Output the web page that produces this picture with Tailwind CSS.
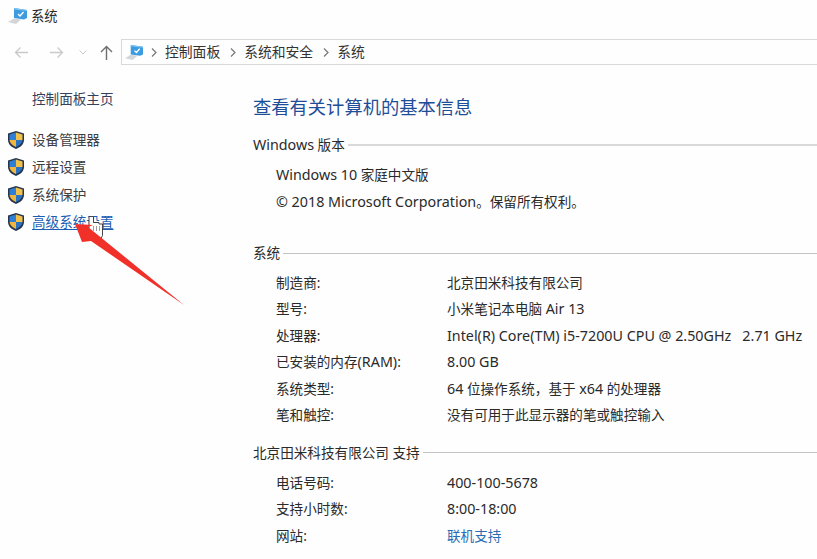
<!DOCTYPE html>
<html lang="zh-CN">
<head>
  <meta charset="UTF-8">
  <title>系统</title>
  <script src="https://cdn.jsdelivr.net/npm/@tailwindcss/browser@4"></script>
</head>
<body class="bg-white">
  <div class="relative w-[817px] h-[559px] overflow-hidden bg-[#fefefe] text-[13.6px] leading-[20px] text-[#2a2a2a] font-['Noto_Sans','Noto_Sans_CJK_SC',sans-serif]">
    <!-- Title bar -->
    <div class="flex items-center h-[32px] pl-[8px] gap-[3px]">
      <svg class="w-[20px] h-[18px]" viewBox="0 0 20 18"><path d="M0 15l6-3.500 7 1-5 4.500z" fill="#d3d6d8"/><path d="M6 1l13 2v8l-3 1.500L6 11z" fill="#3d9be0"/><path d="M6 1l13 2v1L6 2.500z" fill="#7cc4f0"/><path d="M10 7l2 2 3.500-4" fill="none" stroke="#fff" stroke-width="1.400"/></svg>
      <span class="text-[13.300px]">系统</span>
    </div>
    <!-- Toolbar -->
    <div class="flex items-center h-[39px] pt-[1px]">
      <div class="flex items-center w-[121px] pl-[14px]">
        <svg class="w-[15px] h-[13px]" viewBox="0 0 15 13" fill="none" stroke="#c9c9c9" stroke-width="1.300"><path d="M14 6.500H1.500M6.500 1.500l-5 5 5 5"/></svg>
        <svg class="w-[15px] h-[13px] ml-[20px]" viewBox="0 0 15 13" fill="none" stroke="#c9c9c9" stroke-width="1.300"><path d="M1 6.500h12.500M8.500 1.500l5 5-5 5"/></svg>
        <svg class="w-[8px] h-[5px] ml-[15px]" viewBox="0 0 8 5" fill="none" stroke="#c9c9c9"><path d="M.5.500L4 4l3.500-3.500"/></svg>
        <svg class="w-[13px] h-[15px] ml-[13px]" viewBox="0 0 13 15" fill="none" stroke="#6e6e6e" stroke-width="1.400"><path d="M6.500 15V1.500M1 7l5.500-5.500L12 7"/></svg>
      </div>
      <div class="flex flex-1 items-center h-[26px] pl-[3px] border border-r-0 border-[#d9d9d9] text-[13.800px] text-[#333]">
        <svg class="w-[19px] h-[17px]" viewBox="0 0 20 18"><path d="M0 15l6-3.500 7 1-5 4.500z" fill="#d3d6d8"/><path d="M6 1l13 2v8l-3 1.500L6 11z" fill="#3d9be0"/><path d="M6 1l13 2v1L6 2.500z" fill="#7cc4f0"/><path d="M10 7l2 2 3.500-4" fill="none" stroke="#fff" stroke-width="1.400"/></svg>
        <svg class="w-[6px] h-[9px] ml-[7px] mr-[8px]" viewBox="0 0 6 9" fill="none" stroke="#777" stroke-width="1.200"><path d="M1 .5l4 4-4 4"/></svg>
        <span>控制面板</span>
        <svg class="w-[6px] h-[9px] ml-[10px] mr-[8px]" viewBox="0 0 6 9" fill="none" stroke="#777" stroke-width="1.200"><path d="M1 .5l4 4-4 4"/></svg>
        <span>系统和安全</span>
        <svg class="w-[6px] h-[9px] ml-[10px] mr-[8px]" viewBox="0 0 6 9" fill="none" stroke="#777" stroke-width="1.200"><path d="M1 .5l4 4-4 4"/></svg>
        <span>系统</span>
      </div>
    </div>
    <div class="flex">
      <!-- Sidebar -->
      <aside class="w-[253px] shrink-0 pt-[18px]">
        <div class="pl-[32px] h-[20px] text-[#33415c]">控制面板主页</div>
        <ul class="mt-[21px] flex flex-col gap-[7.300px] pl-[8px] text-[#3c4043]">
          <li class="flex items-center h-[20px] gap-[8px]">
            <svg class="w-[16px] h-[18px]" viewBox="0 0 16 18"><path d="M8 0l8 2.500V9c0 4.500-4 7.500-8 9-4-1.500-8-4.500-8-9V2.500z" fill="#27364d"/><path d="M8 1.500V9H1.500V3.500z" fill="#2f7fd6"/><path d="M8 1.500L14.500 3.500V9H8z" fill="#f2c14a"/><path d="M1.500 9H8v7c-3-1.300-6-3.500-6.500-7z" fill="#f2b63c"/><path d="M8 9h6.500c-.5 3.500-3.500 5.700-6.500 7z" fill="#2a72c4"/></svg>
            <span>设备管理器</span>
          </li>
          <li class="flex items-center h-[20px] gap-[8px]">
            <svg class="w-[16px] h-[18px]" viewBox="0 0 16 18"><path d="M8 0l8 2.500V9c0 4.500-4 7.500-8 9-4-1.500-8-4.500-8-9V2.500z" fill="#27364d"/><path d="M8 1.500V9H1.500V3.500z" fill="#2f7fd6"/><path d="M8 1.500L14.500 3.500V9H8z" fill="#f2c14a"/><path d="M1.500 9H8v7c-3-1.300-6-3.500-6.500-7z" fill="#f2b63c"/><path d="M8 9h6.500c-.5 3.500-3.500 5.700-6.500 7z" fill="#2a72c4"/></svg>
            <span>远程设置</span>
          </li>
          <li class="flex items-center h-[20px] gap-[8px]">
            <svg class="w-[16px] h-[18px]" viewBox="0 0 16 18"><path d="M8 0l8 2.500V9c0 4.500-4 7.500-8 9-4-1.500-8-4.500-8-9V2.500z" fill="#27364d"/><path d="M8 1.500V9H1.500V3.500z" fill="#2f7fd6"/><path d="M8 1.500L14.500 3.500V9H8z" fill="#f2c14a"/><path d="M1.500 9H8v7c-3-1.300-6-3.500-6.500-7z" fill="#f2b63c"/><path d="M8 9h6.500c-.5 3.500-3.500 5.700-6.500 7z" fill="#2a72c4"/></svg>
            <span>系统保护</span>
          </li>
          <li class="flex items-center h-[20px] gap-[8px]">
            <svg class="w-[16px] h-[18px]" viewBox="0 0 16 18"><path d="M8 0l8 2.500V9c0 4.500-4 7.500-8 9-4-1.500-8-4.500-8-9V2.500z" fill="#27364d"/><path d="M8 1.500V9H1.500V3.500z" fill="#2f7fd6"/><path d="M8 1.500L14.500 3.500V9H8z" fill="#f2c14a"/><path d="M1.500 9H8v7c-3-1.300-6-3.500-6.500-7z" fill="#f2b63c"/><path d="M8 9h6.500c-.5 3.500-3.500 5.700-6.500 7z" fill="#2a72c4"/></svg>
            <a class="text-[#1a5fb4] underline underline-offset-2">高级系统设置</a>
          </li>
        </ul>
      </aside>
      <!-- Main -->
      <main class="flex-1 pt-[23px]">
        <h1 class="text-[18.300px] leading-[26px] text-[#1f4e99] font-normal">查看有关计算机的基本信息</h1>
        <div class="flex items-center h-[20px] mt-[15px] gap-[3px]"><span><span class="text-[14.3px]">Windows</span> 版本</span><div class="flex-1 h-[2px] bg-[#d9d9d9]"></div></div>
        <div class="pl-[23px] mt-[10px]">
          <div class="h-[20px]"><span class="text-[14.3px]">Windows 10</span> 家庭中文版</div>
          <div class="h-[20px] mt-[7px]"><span class="text-[14.3px]">© 2018 Microsoft Corporation</span>。保留所有权利。</div>
        </div>
        <div class="flex items-center h-[20px] mt-[31px] gap-[3px]"><span>系统</span><div class="flex-1 h-px bg-[#c4c4c4]"></div></div>
        <dl class="grid grid-cols-[171px_1fr] auto-rows-[20px] gap-y-[6.400px] pl-[23px] mt-[10px]">
          <dt>制造商:</dt><dd>北京田米科技有限公司</dd>
          <dt>型号:</dt><dd>小米笔记本电脑 <span class="text-[14.3px]">Air 13</span></dd>
          <dt>处理器:</dt><dd class="whitespace-pre text-[14.3px]">Intel(R) Core(TM) i5-7200U CPU @ 2.50GHz   2.71 GHz</dd>
          <dt>已安装的内存<span class="text-[14.3px]">(RAM)</span>:</dt><dd class="text-[14.3px]">8.00 GB</dd>
          <dt>系统类型:</dt><dd><span class="text-[14.3px]">64</span> 位操作系统，基于 <span class="text-[14.3px]">x64</span> 的处理器</dd>
          <dt>笔和触控:</dt><dd>没有可用于此显示器的笔或触控输入</dd>
        </dl>
        <div class="flex items-center h-[20px] mt-[18px] gap-[3px]"><span>北京田米科技有限公司 支持</span><div class="flex-1 h-px bg-[#c4c4c4]"></div></div>
        <dl class="grid grid-cols-[171px_1fr] auto-rows-[20px] gap-y-[6.400px] pl-[23px] mt-[10px]">
          <dt>电话号码:</dt><dd class="text-[14.3px]">400-100-5678</dd>
          <dt>支持小时数:</dt><dd class="text-[14.3px]">8:00-18:00</dd>
          <dt>网站:</dt><dd class="text-[#2a6db5]">联机支持</dd>
        </dl>
      </main>
    </div>
    <!-- Annotation arrow and hand cursor over the link -->
    <svg class="absolute left-0 top-0 w-[817px] h-[559px] pointer-events-none" viewBox="0 0 817 559">
      <path d="M89 216.500h4.500v6h5.500v1.500h3.500v11.500l-1.500 3h-8l-1-5.500-3-3.500z" fill="#fff" stroke="#333" stroke-width=".9"/>
      <path d="M93.500 226v5M96.500 226v5M99.500 226v5" stroke="#777" stroke-width=".7"/>
      <path d="M75 224l18 1-5 2 96 78-93-64-9 1z" fill="#f2302a"/>
    </svg>
  </div>
</body>
</html>
